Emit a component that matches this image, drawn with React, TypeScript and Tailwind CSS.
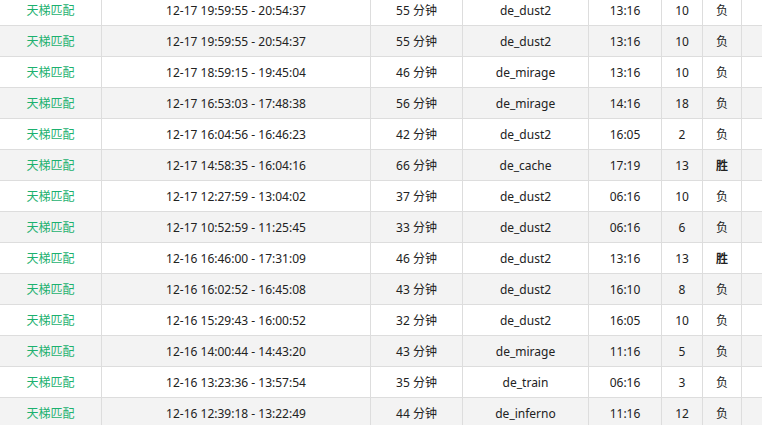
import React from "react";

type Match = {
    time: string
    mins: number
    map: string
    score: string
    kills: number
    result: string
}

const matches: Match[] = [
    {time: "12-17 19:59:55 - 20:54:37", mins: 55, map: "de_dust2", score: "13:16", kills: 10, result: "负"},
    {time: "12-17 19:59:55 - 20:54:37", mins: 55, map: "de_dust2", score: "13:16", kills: 10, result: "负"},
    {time: "12-17 18:59:15 - 19:45:04", mins: 46, map: "de_mirage", score: "13:16", kills: 10, result: "负"},
    {time: "12-17 16:53:03 - 17:48:38", mins: 56, map: "de_mirage", score: "14:16", kills: 18, result: "负"},
    {time: "12-17 16:04:56 - 16:46:23", mins: 42, map: "de_dust2", score: "16:05", kills: 2, result: "负"},
    {time: "12-17 14:58:35 - 16:04:16", mins: 66, map: "de_cache", score: "17:19", kills: 13, result: "胜"},
    {time: "12-17 12:27:59 - 13:04:02", mins: 37, map: "de_dust2", score: "06:16", kills: 10, result: "负"},
    {time: "12-17 10:52:59 - 11:25:45", mins: 33, map: "de_dust2", score: "06:16", kills: 6, result: "负"},
    {time: "12-16 16:46:00 - 17:31:09", mins: 46, map: "de_dust2", score: "13:16", kills: 13, result: "胜"},
    {time: "12-16 16:02:52 - 16:45:08", mins: 43, map: "de_dust2", score: "16:10", kills: 8, result: "负"},
    {time: "12-16 15:29:43 - 16:00:52", mins: 32, map: "de_dust2", score: "16:05", kills: 10, result: "负"},
    {time: "12-16 14:00:44 - 14:43:20", mins: 43, map: "de_mirage", score: "11:16", kills: 5, result: "负"},
    {time: "12-16 13:23:36 - 13:57:54", mins: 35, map: "de_train", score: "06:16", kills: 3, result: "负"},
    {time: "12-16 12:39:18 - 13:22:49", mins: 44, map: "de_inferno", score: "11:16", kills: 12, result: "负"},
]

const cell = "flex items-center justify-center pt-[2px] border-r border-[#dddddd] shrink-0"

export default function App() {
    return (
        <div className="w-[762px] h-[425px] overflow-hidden bg-white text-[12px] text-[#222]"
             style={{fontFamily: '"Noto Sans", "Noto Sans CJK SC", sans-serif'}}>
            <div className="-mt-[5px] flex flex-col">
                {matches.map((m, i) => (
                    <div key={i}
                         className={`flex h-[31px] border-b border-[#dddddd] ${i % 2 === 1 ? "bg-[#f3f3f3]" : "bg-white"}`}>
                        <div className={`${cell} w-[102px] text-[#1db16f]`}>天梯匹配</div>
                        <div className={`${cell} w-[269px]`}>{m.time}</div>
                        <div className={`${cell} w-[92px]`}>{m.mins} 分钟</div>
                        <div className={`${cell} w-[126px]`}>{m.map}</div>
                        <div className={`${cell} w-[73px]`}>{m.score}</div>
                        <div className={`${cell} w-[41px]`}>{m.kills}</div>
                        <div className={`${cell} w-[39px] ${m.result === "胜" ? "font-bold" : ""}`}>{m.result}</div>
                        <div className="flex-1"/>
                    </div>
                ))}
            </div>
        </div>
    )
}
